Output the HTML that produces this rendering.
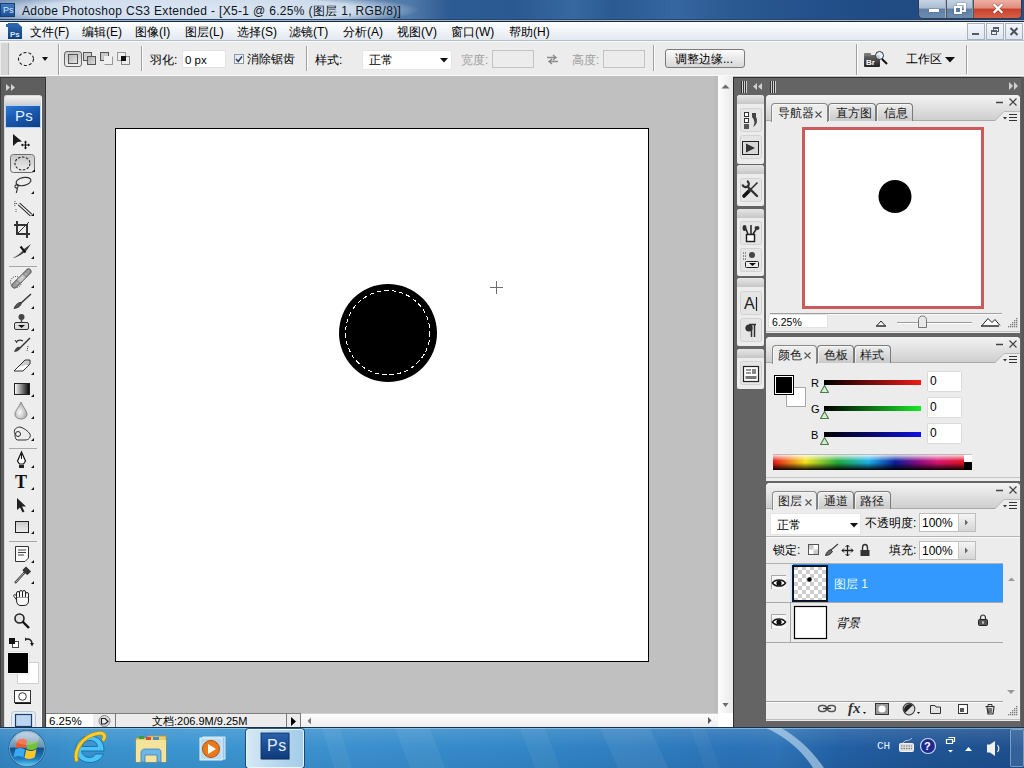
<!DOCTYPE html>
<html><head><meta charset="utf-8">
<style>
*{margin:0;padding:0;box-sizing:border-box}
html,body{width:1024px;height:768px;overflow:hidden;background:#c0c0c0;font-family:"Liberation Sans",sans-serif;font-size:12px;color:#000;position:relative}
.a{position:absolute}
.t{position:absolute;white-space:nowrap;line-height:14px}
#title{left:0;top:0;width:1024px;height:21px;background:linear-gradient(90deg,#7b98bb 0,#8aa4c4 8%,#6f8fb4 30%,#4f79a8 40%,#2c5a92 44%,#2a5890 50%,#3868a0 56%,#2b5a92 60%,#3666a0 66%,#2a5890 72%,#23508a 80%,#1f4a82 88%,#244f88 100%)}
#glow{left:0;top:0;width:440px;height:20px;background:radial-gradient(ellipse 222px 18px at 198px 10px,rgba(222,232,244,.97) 0,rgba(214,226,240,.92) 72%,rgba(195,212,232,0) 100%)}
#titleline{left:0;top:19px;width:1024px;height:3px;background:linear-gradient(#2a4566 0,#2a4566 33%,#9fb6d2 33%,#9fb6d2 66%,#1c2838 66%)}
#menubar{left:0;top:22px;width:1024px;height:19px;background:linear-gradient(#fdfeff,#f1f4f8 45%,#e2e8f0 100%)}
#menuline{left:0;top:40px;width:1024px;height:1px;background:#b6bcc6}
.mi{top:25px;font-size:12px}
#opts{left:0;top:41px;width:1024px;height:35px;background:#ececec;border-top:1px solid #fafafa}
#optsb{left:0;top:75px;width:1024px;height:1px;background:#f8f8f8}
.sep{width:1px;background:#a0a0a0;box-shadow:1px 0 0 #fff;top:46px;height:25px}
.inp{background:#fff;border:1px solid #c7c7c7;border-radius:2px}
.dis{color:#a0a0a0}
</style></head><body>
<!-- title bar -->
<div id="title" class="a"></div>
<div id="glow" class="a"></div>
<div class="a" style="left:0;top:3px;width:15px;height:14px;background:linear-gradient(#3f7bc4,#1d4f95);border:1px solid #1a3f77"></div>
<div class="t" style="left:3px;top:3px;font-size:9px;color:#d8e8fa">Ps</div>
<div class="t" style="left:22px;top:4px;font-size:12px;letter-spacing:0.33px;color:#0b141c">Adobe Photoshop CS3 Extended - [X5-1 @ 6.25% (图层 1, RGB/8)]</div>
<div class="a" style="left:918px;top:0;width:104px;height:19px;border:1px solid #2b3b52;border-top:none;border-radius:0 0 5px 5px;overflow:hidden;background:#555">
 <div class="a" style="left:0;top:0;width:27px;height:18px;background:linear-gradient(#c6d3e3 0,#a9bcd3 45%,#5f7ea4 50%,#6c8cb2 100%);border-right:1px solid #9fb2c8"></div>
 <div class="a" style="left:28px;top:0;width:26px;height:18px;background:linear-gradient(#c6d3e3 0,#a9bcd3 45%,#5f7ea4 50%,#6c8cb2 100%);border-right:1px solid #7d93ad"></div>
 <div class="a" style="left:55px;top:0;width:48px;height:18px;background:linear-gradient(#efb0a4 0,#e08d7c 45%,#c9402a 50%,#d4604a 100%)"></div>
 <div class="a" style="left:10px;top:9px;width:10px;height:3px;background:#fff;box-shadow:0 0 1px #333"></div>
 <div class="a" style="left:38px;top:3px;width:9px;height:9px;border:2px solid #fff;box-shadow:0 0 1px #333"></div>
 <div class="a" style="left:35px;top:6px;width:8px;height:8px;border:2px solid #fff;background:#5a7aa0;box-shadow:0 0 1px #333"></div>
 <svg class="a" style="left:55px;top:0" width="48" height="18"><path d="M20.5 5L27.5 12M27.5 5L20.5 12" stroke="#5a1a10" stroke-width="3.6" stroke-linecap="round" opacity=".5"/><path d="M20.5 5L27.5 12M27.5 5L20.5 12" stroke="#fff" stroke-width="2.4" stroke-linecap="square"/></svg>
</div>
<div id="titleline" class="a"></div>
<!-- menu bar -->
<div id="menubar" class="a"></div>
<div id="menuline" class="a"></div>
<div class="a" style="left:8px;top:23px;width:14px;height:16px;background:linear-gradient(#2d69b4,#12407e);clip-path:polygon(0 0,70% 0,100% 25%,100% 100%,0 100%)"></div>
<div class="a" style="left:6px;top:24px;width:12px;height:3px;background:#2a64ad"></div>
<div class="t" style="left:10px;top:28px;font-size:8px;font-weight:bold;color:#d6e6fb">Ps</div>
<div class="t mi" style="left:30px">文件(F)</div>
<div class="t mi" style="left:82px">编辑(E)</div>
<div class="t mi" style="left:135px">图像(I)</div>
<div class="t mi" style="left:185px">图层(L)</div>
<div class="t mi" style="left:237px">选择(S)</div>
<div class="t mi" style="left:289px">滤镜(T)</div>
<div class="t mi" style="left:343px">分析(A)</div>
<div class="t mi" style="left:397px">视图(V)</div>
<div class="t mi" style="left:451px">窗口(W)</div>
<div class="t mi" style="left:509px">帮助(H)</div>
<div class="a" style="left:967px;top:23px;width:18px;height:17px;border:1px solid #a7b2c0;background:linear-gradient(#f4f7fb,#dfe6ef)"></div>
<div class="a" style="left:986px;top:23px;width:18px;height:17px;border:1px solid #a7b2c0;background:linear-gradient(#f4f7fb,#dfe6ef)"></div>
<div class="a" style="left:1005px;top:23px;width:18px;height:17px;border:1px solid #a7b2c0;background:linear-gradient(#f4f7fb,#dfe6ef)"></div>
<div class="a" style="left:972px;top:33px;width:7px;height:2px;background:#545c68"></div>
<div class="a" style="left:993px;top:27px;width:6px;height:5px;border:1px solid #545c68;border-top-width:2px"></div>
<div class="a" style="left:991px;top:30px;width:6px;height:5px;border:1px solid #545c68;border-top-width:2px;background:#e8edf4"></div>
<svg class="a" style="left:1005px;top:23px" width="18" height="17"><path d="M5.5 5L12.5 12M12.5 5L5.5 12" stroke="#4a525e" stroke-width="2"/></svg>
<!-- options bar -->
<div id="opts" class="a"></div>
<div id="optsb" class="a"></div>
<div class="a" style="left:1px;top:43px;width:8px;height:32px;background:#d6d6d6;border-right:1px solid #b5b5b5"></div>
<svg class="a" style="left:16px;top:50px" width="20" height="18"><ellipse cx="10" cy="9" rx="7.5" ry="6.5" fill="none" stroke="#222" stroke-width="1.1" stroke-dasharray="3 2"/></svg>
<svg class="a" style="left:42px;top:57px" width="7" height="5"><path d="M0 0H6L3 4Z" fill="#111"/></svg>
<div class="a sep" style="left:58px;top:44px!important;height:31px!important"></div>
<div class="a" style="left:64px;top:51px;width:18px;height:16px;border:1px solid #666;border-radius:3px;background:linear-gradient(#c9c9c9,#f1f1f1)"></div>
<div class="a" style="left:68px;top:54px;width:10px;height:10px;border:1px solid #555;background:linear-gradient(135deg,#b5b5b5,#e4e4e4)"></div>
<div class="a" style="left:83px;top:52px;width:9px;height:9px;border:1px solid #555;background:#cfcfcf"></div>
<div class="a" style="left:87px;top:56px;width:9px;height:9px;border:1px solid #555;background:linear-gradient(135deg,#aaa,#ddd)"></div>
<div class="a" style="left:100px;top:52px;width:9px;height:9px;border:1px solid #555;background:#c9c9c9"></div>
<div class="a" style="left:104px;top:56px;width:9px;height:9px;border:1px solid #999;background:#f0f0f0;border-top-color:#f0f0f0;border-left-color:#f0f0f0"></div>
<div class="a" style="left:117px;top:52px;width:9px;height:9px;border:1px solid #999;background:#eee"></div>
<div class="a" style="left:121px;top:56px;width:9px;height:9px;border:1px solid #888;background:transparent"></div>
<div class="a" style="left:121px;top:56px;width:5px;height:5px;background:#111"></div>
<div class="a sep" style="left:141px;top:46px;height:25px"></div>
<div class="t" style="left:150px;top:53px">羽化:</div>
<div class="a inp" style="left:182px;top:50px;width:44px;height:18px;border-color:#e2e2e2"></div>
<div class="t" style="left:185px;top:53px;font-size:11.5px">0 px</div>
<div class="a" style="left:234px;top:54px;width:10px;height:10px;border:1px solid #8f9aa8;background:linear-gradient(135deg,#dfe4ea,#fff)"></div>
<svg class="a" style="left:234px;top:54px" width="10" height="10"><path d="M2 5L4.2 7.5L8 2.5" stroke="#2a3f6a" stroke-width="1.5" fill="none"/></svg>
<div class="t" style="left:247px;top:52px">消除锯齿</div>
<div class="a sep" style="left:306px;top:46px;height:25px"></div>
<div class="t" style="left:315px;top:53px">样式:</div>
<div class="a inp" style="left:362px;top:50px;width:90px;height:20px;border-color:#e4e4e4"></div>
<div class="t" style="left:369px;top:53px">正常</div>
<svg class="a" style="left:440px;top:58px" width="9" height="5"><path d="M0 0H8L4 4.5Z" fill="#111"/></svg>
<div class="t dis" style="left:461px;top:53px">宽度:</div>
<div class="a" style="left:492px;top:50px;width:42px;height:18px;border:1px solid #c3c3c3;background:#ececec"></div>
<svg class="a" style="left:546px;top:54px" width="13" height="11"><path d="M1 3.5H10M7 1L10 3.5L7 6M12 7.5H3M6 5L3 7.5L6 10" stroke="#8a8a8a" stroke-width="1.4" fill="none"/></svg>
<div class="t dis" style="left:572px;top:53px">高度:</div>
<div class="a" style="left:603px;top:50px;width:42px;height:18px;border:1px solid #c3c3c3;background:#ececec"></div>
<div class="a sep" style="left:653px;top:45px;height:26px"></div>
<div class="a" style="left:665px;top:49px;width:80px;height:19px;border:1px solid #7b7b7b;border-radius:3px;background:linear-gradient(#fbfbfb,#e9e9e9 50%,#d8d8d8)"></div>
<div class="t" style="left:675px;top:52px">调整边缘...</div>
<div class="a sep" style="left:856px;top:44px;height:31px"></div>
<div class="a" style="left:864px;top:55px;width:16px;height:12px;background:linear-gradient(#6a6a6a,#232323);border-radius:1px"></div>
<div class="a" style="left:864px;top:53px;width:7px;height:3px;background:#777;border-radius:1px 1px 0 0"></div>
<div class="t" style="left:866px;top:56px;font-size:8px;font-weight:bold;color:#fff">Br</div>
<div class="a" style="left:875px;top:51px;width:9px;height:9px;border:1.5px solid #333;border-radius:50%;background:rgba(230,240,250,.8)"></div>
<svg class="a" style="left:881px;top:58px" width="7" height="7"><path d="M1 1L6 6" stroke="#111" stroke-width="2"/></svg>
<div class="t" style="left:906px;top:52px">工作区</div>
<svg class="a" style="left:945px;top:57px" width="11" height="6"><path d="M0 0H10L5 5.5Z" fill="#111"/></svg>
<div class="a sep" style="left:966px;top:45px;height:29px"></div>
<!-- toolbox -->
<div class="a" style="left:0;top:77px;width:46px;height:651px;background:#5e5e5e;border-left:1px solid #3c3c3c;border-top:1px solid #3a3a3a;border-right:1px solid #353535"></div>
<div class="a" style="left:4px;top:95px;width:38px;height:633px;background:#ededed;border-radius:3px 3px 0 0;border:1px solid #d8d8d8;border-right-color:#fbfbfb;border-bottom:none"></div>
<div class="a" style="left:5px;top:96px;width:36px;height:9px;background:linear-gradient(#f2f2f2,#cfcfcf);border-radius:2px 2px 0 0"></div>
<div class="a" style="left:5px;top:105px;width:36px;height:23px;background:linear-gradient(160deg,#2f7ad8 0,#1b5cb3 40%,#0f3f86 100%);border:1px solid #b8d4f0"></div>
<div class="t" style="left:15px;top:107px;font-size:15px;color:#e8f1ff;letter-spacing:0.2px;line-height:18px">Ps</div>
<svg class="a" style="left:0;top:0" width="46" height="728">
 <g fill="#d4d4d4"><path d="M6 84L10 87.5L6 91Z"/><path d="M11 84L15 87.5L11 91Z"/></g>
 <!-- move -->
 <path d="M13 134L22 141.5L17.5 142L13 146Z" fill="#1a1a1a"/>
 <path d="M25.5 141V149M21.5 145H29.5" stroke="#111" stroke-width="1.2"/>
 <path d="M24 142.5H27L25.5 140.5Z M24 147.5H27L25.5 149.5Z M23 143.5V146.5L21 145Z M28 143.5V146.5L30 145Z" fill="#111"/>
 <!-- marquee selected -->
 <rect x="10.5" y="154.5" width="24" height="18" rx="3" fill="#d9d9d9" stroke="#6d6d6d"/>
 <rect x="11.5" y="155.5" width="22" height="16" rx="2" fill="url(#gsel)"/>
 <ellipse cx="22.5" cy="163.5" rx="7.5" ry="6.5" fill="none" stroke="#222" stroke-width="1.1" stroke-dasharray="2.5 1.5"/>
 <path d="M32 172L35 169V172Z" fill="#111"/>
 <!-- lasso -->
 <ellipse cx="23.5" cy="181.5" rx="7.5" ry="4" fill="none" stroke="#333" stroke-width="1.2" transform="rotate(-12 23.5 181.5)"/>
 <circle cx="16.5" cy="186.5" r="1.6" fill="none" stroke="#333" stroke-width="1.1"/>
 <path d="M17 188C18 190 16 191 16.5 193" stroke="#333" stroke-width="1.2" fill="none"/>
 <path d="M31 194L34 191V194Z" fill="#111"/>
 <!-- wand -->
 <path d="M15 201V206M14 203.5H17M16 209V213" stroke="#555" stroke-width="1" stroke-dasharray="1 1"/>
 <path d="M19 204L31 215" stroke="#222" stroke-width="3.2"/>
 <path d="M19 204L31 215" stroke="#eee" stroke-width="1.4"/>
 <path d="M31 216L34 213V216Z" fill="#111"/>
 <!-- crop -->
 <path d="M17 221V234H30M14 225H27V238" stroke="#333" stroke-width="2" fill="none"/>
 <path d="M17 234L29 222" stroke="#333" stroke-width="1"/>
 <!-- slice -->
 <path d="M13 258C17 256 21 253 24 249L31 244L27 250C23 254 18 257 13 258Z" fill="#3a3a3a"/>
 <path d="M13 258C18 255 22 252 24.5 249" stroke="#aaa" stroke-width=".7" fill="none"/>
 <path d="M20.5 246.5L25.5 252.5" stroke="#111" stroke-width="2"/>
 <path d="M31 259L34 256V259Z" fill="#111"/>
 <path d="M9 266.5H37" stroke="#a8a8a8"/>
 <!-- heal -->
 <circle cx="16" cy="282" r="5.5" fill="none" stroke="#333" stroke-width="1" stroke-dasharray="1 1.2"/>
 <path d="M14.5 285.5L28.5 271.5" stroke="#555" stroke-width="6" stroke-linecap="round"/>
 <path d="M14.5 285.5L28.5 271.5" stroke="#9a9a9a" stroke-width="4.2" stroke-linecap="round"/>
 <path d="M19 281L24 276" stroke="#c8c8c8" stroke-width="4.2"/>
 <g fill="#eee"><circle cx="17" cy="283" r=".6"/><circle cx="26" cy="274" r=".6"/><circle cx="21" cy="279" r=".5"/><circle cx="22.5" cy="277.5" r=".5"/></g>
 <path d="M31 288L34 285V288Z" fill="#111"/>
 <!-- brush -->
 <path d="M31 294L20 304" stroke="#333" stroke-width="1.4"/>
 <path d="M14 308.5C15.5 304.5 18.5 302 21 302.5C22 304.5 19 308 14 308.5Z" fill="#555" stroke="#222" stroke-width=".7"/>
 <path d="M31 309L34 306V309Z" fill="#111"/>
 <!-- stamp -->
 <circle cx="21.5" cy="317" r="3" fill="#444"/>
 <path d="M21.5 319V323" stroke="#444" stroke-width="1.5"/>
 <rect x="14.5" y="322.5" width="14" height="7" rx="1.5" fill="#ddd" stroke="#333"/>
 <path d="M18 325H25L21.5 328Z" fill="#111"/>
 <path d="M31 331L34 328V331Z" fill="#111"/>
 <!-- history brush -->
 <path d="M30 338L19 349" stroke="#333" stroke-width="1.5"/>
 <path d="M14 352C15 348 18 346 20 347C21 349 18 352 14 352Z" fill="#444"/>
 <path d="M16 342C18 340 21 340 23 341" stroke="#333" stroke-width="1.2" fill="none"/>
 <path d="M15 340L17 343" stroke="#333"/>
 <path d="M28 346L27 351" stroke="#333" stroke-dasharray="1 1"/>
 <path d="M31 353L34 350V353Z" fill="#111"/>
 <!-- eraser -->
 <path d="M14 371L21 364H30L23 371Z" fill="#fff" stroke="#333"/>
 <path d="M18 367L25 360H30V364" fill="#ccc" stroke="#333"/>
 <path d="M31 375L34 372V375Z" fill="#111"/>
 <!-- gradient -->
 <defs>
  <linearGradient id="gg" x1="0" x2="1"><stop offset="0" stop-color="#fff"/><stop offset="1" stop-color="#000"/></linearGradient>
  <linearGradient id="gsel" x1="0" y1="0" x2="0" y2="1"><stop offset="0" stop-color="#c7c7c7"/><stop offset="1" stop-color="#efefef"/></linearGradient>
  <radialGradient id="gdrop" cx="0.4" cy="0.6" r="0.7"><stop offset="0" stop-color="#fafafa"/><stop offset="1" stop-color="#9a9a9a"/></radialGradient>
 </defs>
 <rect x="14.5" y="383.5" width="15" height="11" fill="url(#gg)" stroke="#222"/>
 <path d="M31 397L34 394V397Z" fill="#111"/>
 <!-- blur drop -->
 <path d="M21 402C19 407 15 411 15 414C15 417.5 18 419 21 419C24 419 27 417.5 27 414C27 411 23 407 21 402Z" fill="url(#gdrop)" stroke="#777" stroke-width=".8"/>
 <path d="M31 419L34 416V419Z" fill="#111"/>
 <!-- dodge -->
 <path d="M15 434C13 430 16 427 20 427C24 428 28 431 30 434C31 437 29 440 25 440H17C15 439 15 436 15 434Z" fill="#ededed" stroke="#333" stroke-width="1"/>
 <circle cx="18" cy="434" r="2.5" fill="none" stroke="#333"/>
 <path d="M31 441L34 438V441Z" fill="#111"/>
 <path d="M9 448.5H37" stroke="#a8a8a8"/>
 <!-- pen -->
 <path d="M21.5 452L25.5 461L23.5 464H19.5L17.5 461Z" fill="#fff" stroke="#111" stroke-width="1.2"/>
 <path d="M21.5 454V459" stroke="#111"/>
 <path d="M19 465H24V468H19Z" fill="#222"/>
 <path d="M31 468L34 465V468Z" fill="#111"/>
 <!-- type -->
 <path d="M31 490L34 487V490Z" fill="#111"/>
 <!-- path select -->
 <path d="M17 498V510L20 507.5L22.5 512.5L24.5 511.5L22 506.5H26Z" fill="#222"/>
 <path d="M31 512L34 509V512Z" fill="#111"/>
 <!-- shape -->
 <rect x="15.5" y="521.5" width="13" height="11" fill="url(#gsel)" stroke="#222"/>
 <path d="M31 534L34 531V534Z" fill="#111"/>
 <path d="M9 541.5H37" stroke="#a8a8a8"/>
 <!-- notes -->
 <path d="M15.5 546.5H28.5V558L25 561.5H15.5Z" fill="#fafafa" stroke="#333"/>
 <path d="M18 550H26M18 552.5H26M18 555H24" stroke="#444"/>
 <path d="M31 563L34 560V563Z" fill="#111"/>
 <!-- eyedropper -->
 <path d="M15 583L25 572" stroke="#222" stroke-width="2"/>
 <path d="M15.5 582.5L24.5 572.5" stroke="#eee" stroke-width=".8"/>
 <path d="M23 570L27 574M26 567.5L30 571.5L27.5 574L23.5 570Z" stroke="#333" stroke-width="1.5" fill="#333"/>
 <path d="M31 584L34 581V584Z" fill="#111"/>
 <!-- hand -->
 <g fill="#f7f7f7" stroke="#222" stroke-width="1">
  <path d="M17.5 601L14 596.5C13 595 14.5 593.8 15.8 595L18.5 598"/>
  <rect x="16.5" y="591.5" width="3" height="8" rx="1.5"/>
  <rect x="19.5" y="590.5" width="3" height="9" rx="1.5"/>
  <rect x="22.5" y="590.5" width="3" height="9" rx="1.5"/>
  <rect x="25.5" y="592.5" width="3" height="7" rx="1.5"/>
  <path d="M16.5 597.5H28.5V601C28.5 604 26.5 605.5 24 605.5H20C18 605.5 16.5 603 16.5 600Z"/>
 </g>
 <path d="M17.2 598H27.8" stroke="#f7f7f7" stroke-width="1.2"/>
 <!-- zoom -->
 <circle cx="19.5" cy="618.5" r="4.5" fill="#e4e4e4" stroke="#222" stroke-width="1.6"/>
 <path d="M22.5 621.5L29 628" stroke="#111" stroke-width="2.4"/>
 <!-- small fg/bg -->
 <rect x="12.5" y="641.5" width="6" height="6" fill="#fff" stroke="#444"/>
 <rect x="9" y="638" width="6" height="6" fill="#111"/>
 <path d="M27 639C30 639 32 641 32 644" stroke="#222" stroke-width="1.4" fill="none"/>
 <path d="M25 637.5L28 639L25 641Z M30 643L32 646.5L34 643Z" fill="#222"/>
 <!-- fg/bg big -->
 <rect x="17.5" y="662.5" width="21" height="21" fill="#fff" stroke="#cfcfcf"/>
 <rect x="7.5" y="652.5" width="21" height="21" fill="#000" stroke="#fff"/>
 <rect x="7" y="652" width="22" height="22" fill="none" stroke="#d0d0d0" stroke-width=".5"/>
 <!-- quick mask -->
 <rect x="14.5" y="690.5" width="16" height="12" fill="#fff" stroke="#333"/>
 <path d="M15 703H31V704H15Z" fill="#111"/>
 <circle cx="22.5" cy="696.5" r="3.8" fill="#fff" stroke="#333"/>
 <!-- screen mode -->
 <rect x="11.5" y="711.5" width="24" height="17" rx="3" fill="#e7edf4" stroke="#b9c6d4"/>
 <rect x="15.5" y="714.5" width="16" height="12" fill="#bcd6f2" stroke="#1d3f6e" stroke-width="1.2"/>
</svg>
<div class="t" style="left:15px;top:473px;font-size:18px;font-weight:bold;font-family:'Liberation Serif',serif;line-height:18px;color:#111">T</div>
<!-- canvas -->
<div class="a" style="left:46px;top:76px;width:672px;height:637px;background:#c0c0c0"></div>
<div class="a" style="left:115px;top:128px;width:534px;height:534px;background:#fff;border:1px solid #000"></div>
<svg class="a" style="left:0;top:0" width="733" height="712">
 <circle cx="388" cy="333" r="49" fill="#000"/>
 <circle cx="387.8" cy="332.8" r="42.2" fill="none" stroke="#fff" stroke-width="1" stroke-dasharray="4.5 3" shape-rendering="crispEdges"/>
 <path d="M490 287.5H503M496.5 281V294" stroke="#6e6e6e" stroke-width="1"/>
</svg>
<!-- vertical scrollbar -->
<div class="a" style="left:714px;top:76px;width:4px;height:637px;background:#bcbcbc"></div>
<div class="a" style="left:718px;top:76px;width:15px;height:637px;background:linear-gradient(90deg,#fdfdfd 0,#f3f3f3 50%,#e9e9e9 100%)"></div>
<svg class="a" style="left:718px;top:77px" width="15" height="636">
 <path d="M3.5 11.5L7.5 7.5L11.5 11.5Z" fill="#6a6a6a"/>
 <path d="M4.5 626L7.5 630L10.5 626Z" fill="#6a6a6a"/>
</svg>
<!-- status bar -->
<div class="a" style="left:46px;top:713px;width:672px;height:15px;background:#ececec;border-top:1px solid #7e7e7e"></div>
<div class="a" style="left:47px;top:714px;width:46px;height:14px;background:#fff"></div>
<div class="t" style="left:49px;top:714px;font-size:11.5px;line-height:14px">6.25%</div>
<svg class="a" style="left:93px;top:713px" width="208" height="15">
 <circle cx="11.5" cy="8" r="5.5" fill="#d8d8d8" stroke="#8a8a8a"/>
 <path d="M8.5 11V5.5H12L15 8.5L12 11Z" fill="#eee" stroke="#222" stroke-width="1.2"/>
 <path d="M22.5 1V15" stroke="#7a7a7a"/>
 <path d="M193.5 1V15M207.5 1V15" stroke="#7a7a7a"/>
 <path d="M198 4L203 8.5L198 13Z" fill="#000"/>
</svg>
<div class="t" style="left:152px;top:714px;font-size:11px;line-height:14px">文档:206.9M/9.25M</div>
<div class="a" style="left:301px;top:713px;width:417px;height:15px;background:linear-gradient(#fefefe,#ececec);border-top:1px solid #d0d0d0"></div>
<svg class="a" style="left:301px;top:713px" width="417" height="15">
 <path d="M10 4.5L6.5 8L10 11.5Z" fill="#777"/>
 <path d="M407 4L410.5 7.5L407 11Z" fill="#555"/>
</svg>
<div class="a" style="left:718px;top:713px;width:15px;height:15px;background:#fff"></div>
<!-- dock -->
<div class="a" style="left:733px;top:77px;width:291px;height:651px;background:#646464;border-left:1px solid #2c2c2c;border-top:1px solid #2f2f2f"></div>
<div class="a" style="left:1021px;top:77px;width:3px;height:651px;background:#585858"></div>
<svg class="a" style="left:733px;top:77px" width="291" height="18">
 <g stroke="#cfcfcf" stroke-width="1"><path d="M9.5 4V16M11.5 4V16M13.5 4V16M38.5 4V16M40.5 4V16M42.5 4V16"/></g>
 <g stroke="#333" stroke-width="1"><path d="M8.5 4V16M10.5 4V16M12.5 4V16M37.5 4V16M39.5 4V16M41.5 4V16"/></g>
 <g fill="#d0d0d0"><path d="M20 9.5L24 6V13Z"/><path d="M25 9.5L29 6V13Z"/><path d="M276 5L280 9L276 13Z"/><path d="M281 5L285 9L281 13Z"/></g>
</svg>
<!-- icon column groups -->
<div class="a" style="left:737px;top:95px;width:27px;height:69px;background:#ececec;border-radius:3px 3px 2px 2px"></div>
<div class="a" style="left:737px;top:165px;width:27px;height:41px;background:#ececec;border-radius:3px 3px 2px 2px"></div>
<div class="a" style="left:737px;top:209px;width:27px;height:67px;background:#ececec;border-radius:3px 3px 2px 2px"></div>
<div class="a" style="left:737px;top:278px;width:27px;height:68px;background:#ececec;border-radius:3px 3px 2px 2px"></div>
<div class="a" style="left:737px;top:349px;width:27px;height:40px;background:#ececec;border-radius:3px 3px 2px 2px"></div>
<div class="a" style="left:737px;top:95px;width:27px;height:9px;background:linear-gradient(#e6e6e6,#c6c6c6);border-radius:3px 3px 0 0"></div>
<div class="a" style="left:737px;top:165px;width:27px;height:9px;background:linear-gradient(#e6e6e6,#c6c6c6);border-radius:3px 3px 0 0"></div>
<div class="a" style="left:737px;top:209px;width:27px;height:9px;background:linear-gradient(#e6e6e6,#c6c6c6);border-radius:3px 3px 0 0"></div>
<div class="a" style="left:737px;top:278px;width:27px;height:9px;background:linear-gradient(#e6e6e6,#c6c6c6);border-radius:3px 3px 0 0"></div>
<div class="a" style="left:737px;top:349px;width:27px;height:9px;background:linear-gradient(#e6e6e6,#c6c6c6);border-radius:3px 3px 0 0"></div>
<svg class="a" style="left:0;top:0" width="766" height="400">
 <g fill="#e5e5e5" stroke="#d2d2d2">
  <rect x="740.5" y="108.5" width="21" height="23" rx="2"/>
  <rect x="740.5" y="135.5" width="21" height="23" rx="2"/>
  <rect x="740.5" y="178.5" width="21" height="23" rx="2"/>
  <rect x="740.5" y="221.5" width="21" height="23" rx="2"/>
  <rect x="740.5" y="248.5" width="21" height="23" rx="2"/>
  <rect x="740.5" y="291.5" width="21" height="23" rx="2"/>
  <rect x="740.5" y="318.5" width="21" height="23" rx="2"/>
  <rect x="740.5" y="361.5" width="21" height="23" rx="2"/>
 </g>
 <!-- history -->
 <rect x="744.5" y="112.5" width="4" height="4" fill="#fff" stroke="#333"/>
 <rect x="744.5" y="118.5" width="4" height="4" fill="#fff" stroke="#333"/>
 <rect x="744" y="124" width="5" height="5" fill="#555"/>
 <path d="M752 113H756V117C758 120 757 125 753 127C755 124 755 120 752 117Z" fill="#444"/>
 <!-- actions -->
 <rect x="742.5" y="141.5" width="16" height="13" fill="#d8d8d8" stroke="#222"/>
 <path d="M746 143.5L755 148L746 152.5Z" fill="#333"/>
 <!-- tools -->
 <path d="M744 196L749 191" stroke="#111" stroke-width="3.6" stroke-linecap="round"/>
 <path d="M748.5 191.5L757.5 182.5" stroke="#333" stroke-width="1.6"/>
 <path d="M748 187L757 196" stroke="#333" stroke-width="2.4" stroke-linecap="round"/>
 <path d="M742.5 184.5A3.2 3.2 0 1 0 747 181" stroke="#333" stroke-width="2.2" fill="none"/>
 <!-- brushes -->
 <rect x="746.5" y="234.5" width="8" height="7" fill="#fff" stroke="#222" stroke-width="1.5"/>
 <path d="M748 234L745 227M751 234V225M753 234L757 228" stroke="#222" stroke-width="1.5"/>
 <ellipse cx="744.5" cy="228" rx="2" ry="3" fill="#333"/><ellipse cx="757" cy="228" rx="2.5" ry="2" fill="#333"/>
 <!-- clone source -->
 <path d="M743 253H746M743 256H746M743 259H746" stroke="#333" stroke-dasharray="1 1"/>
 <circle cx="752" cy="255" r="3" fill="#444"/>
 <rect x="745.5" y="261.5" width="13" height="6" rx="1" fill="#eee" stroke="#222"/>
 <path d="M749 263H756L752.5 266Z" fill="#111"/>
 <!-- character -->
 <path d="M756.5 297V311" stroke="#222" stroke-width="1.2"/>
 <!-- paragraph -->
 <circle cx="749" cy="328" r="3.6" fill="#333"/>
 <path d="M749 324.5H756M751.5 325V337M754.5 325V337" stroke="#333" stroke-width="1.5"/>
 <!-- layer comps -->
 <rect x="743.5" y="366.5" width="15" height="15" fill="#fff" stroke="#222" stroke-width="1.2"/>
 <path d="M746 370H751M746 373H751" stroke="#333" stroke-width="1.2"/>
 <rect x="752" y="369" width="4" height="5" fill="#888"/>
 <rect x="745.5" y="376" width="11" height="3" fill="#777"/>
</svg>
<div class="t" style="left:744px;top:296px;font-size:16px;line-height:16px;color:#222">A</div>
<!-- panel common -->
<style>
.pnl{position:absolute;left:766px;width:254px;background:#ececec;border-radius:4px 4px 0 0;overflow:hidden}
.phd{position:absolute;left:0;top:0;width:254px;height:26px;background:linear-gradient(#f3f3f3 0,#e4e4e4 40%,#cdcdcd 100%)}
.pln{position:absolute;left:0;top:25px;width:254px;height:1px;background:#a9a9a9}
.tab{position:absolute;top:8px;height:18px;border:1px solid #7b7b7b;border-bottom:none;border-radius:4px 4px 0 0;background:linear-gradient(#ededed,#c9c9c9);box-shadow:inset 1px 1px 0 rgba(255,255,255,.6)}
.tab.on{background:#ececec;height:19px;border-color:#8a8a8a}
.tt{position:absolute;top:11px;white-space:nowrap;line-height:14px;font-size:12px;color:#1a1a1a}
.pmenu{position:absolute;top:0;width:254px;height:26px}
</style>
<!-- NAVIGATOR -->
<div class="pnl" style="top:95px;height:238px">
 <div class="phd"></div>
 <div class="pln"></div>
 <div class="tab on" style="left:5px;width:57px"></div>
 <div class="tab" style="left:62px;width:48px"></div>
 <div class="tab" style="left:110px;width:37px"></div>
 <div class="tt" style="left:12px">导航器</div>
 <div class="tt" style="left:70px">直方图</div>
 <div class="tt" style="left:118px">信息</div>
 <svg class="a" style="left:0;top:0" width="254" height="238">
  <path d="M49.5 16.5L55.5 22.5M55.5 16.5L49.5 22.5" stroke="#555" stroke-width="1.1"/>
  <path d="M230 7.5H237" stroke="#444" stroke-width="1.6"/>
  <path d="M243.5 3.5L250.5 10.5M250.5 3.5L243.5 10.5" stroke="#444" stroke-width="1.2"/>
  <path d="M229 26L238 17H254V26Z" fill="#ececec"/>
  <path d="M229 25.5L238 16.5H254" stroke="#b9b9b9" fill="none"/>
  <path d="M237 22L241 22L239 24.5Z" fill="#333"/>
  <path d="M243 19.5H251M243 22.5H251M243 25.5H251" stroke="#333" stroke-width="1.2"/>
  <!-- thumbnail -->
  <rect x="37.5" y="33.5" width="179" height="179" fill="#fff" stroke="#cc5a5a" stroke-width="3"/>
  <circle cx="129" cy="101.5" r="16.5" fill="#000"/>
  <!-- separator line -->
  <path d="M4 218.5H236" stroke="#a0a0a0"/>
  <path d="M4 219.5H236" stroke="#fafafa"/>
  <rect x="2.5" y="219.5" width="59" height="13" fill="#fff" stroke="#e3e3e3"/>
  <!-- zoom slider -->
  <path d="M111 230.5L115 226L119 230.5" fill="#fff" stroke="#222" stroke-width="1"/>
  <path d="M110 231H120" stroke="#111" stroke-width="1.3"/>
  <path d="M131 227.5H206" stroke="#9a9a9a"/>
  <path d="M131 228.5H206" stroke="#fff"/>
  <path d="M152.5 232.5V224.5C152.5 222 155 221 156.5 221C158 221 160.5 222 160.5 224.5V232.5Z" fill="#e8e8e8" stroke="#777"/>
  <path d="M216 230.5L222 223.5L226 227.5L229 224.5L234 230.5" fill="#fff" stroke="#222" stroke-width="1"/>
  <path d="M215 231H233" stroke="#111" stroke-width="1.3"/>
  <path d="M0 236.5H254" stroke="#c2c2c2"/>
  <g fill="#7a7a7a"><rect x="250" y="223" width="1.3" height="1.3"/><rect x="248" y="225" width="1.3" height="1.3"/><rect x="250" y="225" width="1.3" height="1.3"/><rect x="246" y="227" width="1.3" height="1.3"/><rect x="248" y="227" width="1.3" height="1.3"/><rect x="250" y="227" width="1.3" height="1.3"/><rect x="244" y="229" width="1.3" height="1.3"/><rect x="246" y="229" width="1.3" height="1.3"/><rect x="248" y="229" width="1.3" height="1.3"/><rect x="250" y="229" width="1.3" height="1.3"/><rect x="242" y="231" width="1.3" height="1.3"/><rect x="244" y="231" width="1.3" height="1.3"/><rect x="246" y="231" width="1.3" height="1.3"/><rect x="248" y="231" width="1.3" height="1.3"/><rect x="250" y="231" width="1.3" height="1.3"/></g>
 </svg>
 <div class="t" style="left:6px;top:221px;font-size:10.5px;line-height:13px">6.25%</div>
</div>
<!-- COLOR -->
<div class="pnl" style="top:337px;height:144px">
 <div class="phd"></div>
 <div class="pln"></div>
 <div class="tab on" style="left:6px;width:45px"></div>
 <div class="tab" style="left:51px;width:37px"></div>
 <div class="tab" style="left:88px;width:37px"></div>
 <div class="tt" style="left:12px">颜色</div>
 <div class="tt" style="left:58px">色板</div>
 <div class="tt" style="left:94px">样式</div>
 <svg class="a" style="left:0;top:0" width="254" height="144">
  <defs>
   <linearGradient id="hue" x1="0" x2="1">
    <stop offset="0" stop-color="#e8141c"/><stop offset=".17" stop-color="#f3e11b"/><stop offset=".34" stop-color="#1fa83a"/><stop offset=".5" stop-color="#19b0e8"/><stop offset=".64" stop-color="#0a1d9a"/><stop offset=".76" stop-color="#8a0a82"/><stop offset=".86" stop-color="#d8156e"/><stop offset="1" stop-color="#e01020"/>
   </linearGradient>
   <linearGradient id="wb" x1="0" y1="0" x2="0" y2="1">
    <stop offset="0" stop-color="#fff" stop-opacity=".95"/><stop offset=".45" stop-color="#fff" stop-opacity="0"/><stop offset=".55" stop-color="#000" stop-opacity="0"/><stop offset="1" stop-color="#000" stop-opacity=".95"/>
   </linearGradient>
   <linearGradient id="sr" x1="0" x2="1"><stop offset="0" stop-color="#000"/><stop offset="1" stop-color="#f01818"/></linearGradient>
   <linearGradient id="sg" x1="0" x2="1"><stop offset="0" stop-color="#000"/><stop offset="1" stop-color="#18e828"/></linearGradient>
   <linearGradient id="sb" x1="0" x2="1"><stop offset="0" stop-color="#000"/><stop offset="1" stop-color="#1010e0"/></linearGradient>
  </defs>
  <path d="M38.5 15.5L44.5 21.5M44.5 15.5L38.5 21.5" stroke="#555" stroke-width="1.1"/>
  <path d="M230 7.5H237" stroke="#444" stroke-width="1.6"/>
  <path d="M243.5 3.5L250.5 10.5M250.5 3.5L243.5 10.5" stroke="#444" stroke-width="1.2"/>
  <path d="M229 26L238 17H254V26Z" fill="#ececec"/>
  <path d="M229 25.5L238 16.5H254" stroke="#b9b9b9" fill="none"/>
  <path d="M237 22L241 22L239 24.5Z" fill="#333"/>
  <path d="M243 19.5H251M243 22.5H251M243 25.5H251" stroke="#333" stroke-width="1.2"/>
  <!-- swatches -->
  <rect x="20.5" y="50.5" width="19" height="19" fill="#fff" stroke="#a8a8a8"/>
  <rect x="8.5" y="38.5" width="19" height="19" fill="#000" stroke="#000"/>
  <rect x="9.5" y="39.5" width="17" height="17" fill="#000" stroke="#fff"/>
  <!-- sliders -->
  <rect x="58" y="43" width="97" height="5" fill="url(#sr)"/>
  <rect x="58" y="69" width="97" height="5" fill="url(#sg)"/>
  <rect x="58" y="95" width="97" height="5" fill="url(#sb)"/>
  <g fill="#d4ecd0" stroke="#4a7a4a" stroke-width="1.1" stroke-linejoin="round">
   <path d="M54.5 55.5L58.5 48.5L62.5 55.5Z"/>
   <path d="M54.5 81.5L58.5 74.5L62.5 81.5Z"/>
   <path d="M54.5 107.5L58.5 100.5L62.5 107.5Z"/>
  </g>
  <g fill="#fff" stroke="#dadada">
   <rect x="161.5" y="34.5" width="34" height="20" rx="1"/>
   <rect x="161.5" y="60.5" width="34" height="20" rx="1"/>
   <rect x="161.5" y="86.5" width="34" height="20" rx="1"/>
  </g>
  <!-- spectrum -->
  <rect x="7" y="117" width="191" height="16" fill="url(#hue)"/>
  <rect x="7" y="117" width="191" height="16" fill="url(#wb)"/>
  <rect x="198" y="117" width="8" height="8" fill="#fff"/>
  <rect x="198" y="125" width="8" height="8" fill="#000"/>
  <path d="M7 117.5H206" stroke="#888" stroke-opacity=".5"/>
  <path d="M0 140.5H254" stroke="#c4c4c4"/>
 </svg>
 <div class="t" style="left:45px;top:39px;font-size:11px">R</div>
 <div class="t" style="left:45px;top:65px;font-size:11px">G</div>
 <div class="t" style="left:45px;top:91px;font-size:11px">B</div>
 <div class="t" style="left:164px;top:37px;font-size:12px">0</div>
 <div class="t" style="left:164px;top:63px;font-size:12px">0</div>
 <div class="t" style="left:164px;top:89px;font-size:12px">0</div>
</div>
<!-- LAYERS -->
<div class="pnl" style="top:483px;height:238px">
 <div class="phd"></div>
 <div class="pln"></div>
 <div class="tab on" style="left:6px;width:45px"></div>
 <div class="tab" style="left:51px;width:37px"></div>
 <div class="tab" style="left:88px;width:37px"></div>
 <div class="tt" style="left:12px">图层</div>
 <div class="tt" style="left:58px">通道</div>
 <div class="tt" style="left:94px">路径</div>
 <div class="a" style="left:4px;top:30px;width:91px;height:22px;background:#fff;border:1px solid #e6e6e6"></div>
 <div class="t" style="left:11px;top:35px;font-size:12px">正常</div>
 <div class="t" style="left:99px;top:33px;font-size:12px">不透明度:</div>
 <div class="a" style="left:153px;top:30px;width:57px;height:19px;background:#fff;border:1px solid #bdbdbd"></div>
 <div class="a" style="left:192px;top:31px;width:17px;height:17px;background:linear-gradient(#f4f4f4,#d6d6d6);border-left:1px solid #c8c8c8"></div>
 <div class="t" style="left:156px;top:33px;font-size:12px">100%</div>
 <div class="t" style="left:7px;top:60px;font-size:12px">锁定:</div>
 <div class="t" style="left:123px;top:60px;font-size:12px">填充:</div>
 <div class="a" style="left:153px;top:58px;width:57px;height:19px;background:#fff;border:1px solid #bdbdbd"></div>
 <div class="a" style="left:192px;top:59px;width:17px;height:17px;background:linear-gradient(#f4f4f4,#d6d6d6);border-left:1px solid #c8c8c8"></div>
 <div class="t" style="left:156px;top:61px;font-size:12px">100%</div>
 <!-- selected row -->
 <div class="a" style="left:24px;top:81px;width:213px;height:39px;background:#3399ff"></div>
 <div class="a" style="left:24px;top:81px;width:3px;height:39px;background:#cfe4f8"></div>
 <div class="t" style="left:68px;top:94px;font-size:12px;color:#e4fbff">图层 1</div>
 <div class="t" style="left:70px;top:133px;font-size:12px;font-style:italic;color:#000">背景</div>
 <svg class="a" style="left:0;top:0" width="254" height="238">
  <defs>
   <pattern id="chk" x="28" y="83" width="8" height="8" patternUnits="userSpaceOnUse">
    <rect width="8" height="8" fill="#fff"/><rect width="4" height="4" fill="#cdcdcd"/><rect x="4" y="4" width="4" height="4" fill="#cdcdcd"/>
   </pattern>
  </defs>
  <path d="M39.5 16.5L45.5 22.5M45.5 16.5L39.5 22.5" stroke="#555" stroke-width="1.1"/>
  <path d="M230 7.5H237" stroke="#444" stroke-width="1.6"/>
  <path d="M243.5 3.5L250.5 10.5M250.5 3.5L243.5 10.5" stroke="#444" stroke-width="1.2"/>
  <path d="M229 26L238 17H254V26Z" fill="#ececec"/>
  <path d="M229 25.5L238 16.5H254" stroke="#b9b9b9" fill="none"/>
  <path d="M237 22L241 22L239 24.5Z" fill="#333"/>
  <path d="M243 19.5H251M243 22.5H251M243 25.5H251" stroke="#333" stroke-width="1.2"/>
  <path d="M84 40L92 40L88 44.5Z" fill="#111"/>
  <path d="M199 36.5L202 39.5L199 42.5Z" fill="#666"/>
  <path d="M199 64.5L202 67.5L199 70.5Z" fill="#666"/>
  <path d="M0 53.5H254" stroke="#b4b4b4"/>
  <path d="M0 54.5H254" stroke="#fafafa"/>
  <!-- lock icons -->
  <rect x="42.5" y="61.5" width="10" height="10" fill="#fff" stroke="#555"/>
  <rect x="43" y="62" width="4.5" height="4.5" fill="#ccc"/><rect x="47.5" y="66.5" width="4.5" height="4.5" fill="#ccc"/>
  <path d="M65 67L72 61" stroke="#444" stroke-width="1.3"/>
  <path d="M59.5 72.5C60 70 62 67.5 64.5 66.5L66.5 68.5C65 71 62.5 72.5 59.5 72.5Z" fill="#666" stroke="#222" stroke-width=".8"/>
  <path d="M81.5 62V73M76 67.5H87" stroke="#222" stroke-width="1.3"/>
  <path d="M79.5 64L81.5 62L83.5 64M79.5 71L81.5 73L83.5 71M78 65.5L76 67.5L78 69.5M85 65.5L87 67.5L85 69.5" stroke="#222" fill="none"/>
  <path d="M96.5 67V65C96.5 62.5 98 61.5 99 61.5C100 61.5 101.5 62.5 101.5 65V67" stroke="#333" stroke-width="1.4" fill="none"/>
  <rect x="94.5" y="67" width="9" height="6" fill="#333"/>
  <path d="M0 80.5H237" stroke="#b0b0b0"/>
  <!-- row separators -->
  <path d="M0 119.5H237M0 159.5H237" stroke="#a8a8a8"/>
  <path d="M24.5 120V160" stroke="#a8a8a8"/>
  <!-- eye boxes -->
  <path d="M5.5 106V92.5H20" stroke="#aaa" fill="none"/>
  <path d="M5.5 146V131.5H20" stroke="#aaa" fill="none"/>
  <g>
   <rect x="6" y="93" width="14" height="13" fill="#f6f6f6"/>
   <rect x="6" y="132" width="14" height="13" fill="#f6f6f6"/>
   <path d="M6.5 100C9 96 17 96 19.5 100C17 104 9 104 6.5 100Z" fill="#fff" stroke="#1a1a1a" stroke-width="1.5"/>
   <circle cx="13" cy="100" r="2.6" fill="#111"/>
   <path d="M6.5 139C9 135 17 135 19.5 139C17 143 9 143 6.5 139Z" fill="#fff" stroke="#1a1a1a" stroke-width="1.5"/>
   <circle cx="13" cy="139" r="2.6" fill="#111"/>
  </g>
  <!-- layer1 thumb -->
  <rect x="26.5" y="82.5" width="35" height="36" fill="#fff" stroke="#0b1b3a" stroke-width="1"/>
  <rect x="28" y="84" width="32" height="33" fill="url(#chk)"/>
  <rect x="27.5" y="83.5" width="33" height="34" fill="none" stroke="#111"/>
  <circle cx="43.5" cy="96.5" r="2.3" fill="#000"/>
  <!-- bg thumb -->
  <rect x="28.5" y="123.5" width="32" height="32" fill="#fff" stroke="#000" stroke-width="1.2"/>
  <!-- lock on bg -->
  <path d="M214.5 137V135C214.5 133 215.8 132 217 132C218.2 132 219.5 133 219.5 135V137" stroke="#333" stroke-width="1.2" fill="none"/>
  <rect x="212.5" y="136.5" width="9" height="6" rx="1" fill="#555" stroke="#222"/>
  <rect x="216.3" y="138.3" width="1.4" height="2.4" fill="#eee"/>
  <!-- list scrollbar arrows -->
  <path d="M242 98L245.5 94.5L249 98Z" fill="#999"/>
  <path d="M241 207L245 211L249 207Z" fill="#999"/>
  <path d="M0 218.5H237" stroke="#a0a0a0"/>
  <path d="M0 219.5H237" stroke="#fafafa"/>
  <!-- bottom icons -->
  <g fill="none" stroke="#555" stroke-width="1.4"><rect x="52.5" y="222.5" width="8" height="6" rx="3"/><rect x="61.5" y="222.5" width="8" height="6" rx="3"/></g>
  <path d="M57 225.5H65" stroke="#333" stroke-width="1.2"/>
  <rect x="109.5" y="220.5" width="13" height="11" fill="#9a9a9a" stroke="#333"/>
  <circle cx="116" cy="226" r="3.6" fill="#fff"/>
  <circle cx="143" cy="226" r="5.8" fill="#ddd" stroke="#444" stroke-width="1.2"/>
  <path d="M139 230L147 222A5.8 5.8 0 0 0 139 230Z" fill="#222"/>
  <path d="M151 229H154L152.5 231Z M97 229H100L98.5 231Z" fill="#111"/>
  <path d="M164.5 222.5H169L170 224H174.5V230.5H164.5Z" fill="#e4e4e4" stroke="#333"/>
  <rect x="192.5" y="221.5" width="9" height="9" fill="#fff" stroke="#333"/>
  <rect x="194" y="225" width="4" height="4" fill="#555"/>
  <path d="M219.5 223.5H228.5M221 224L222 231H227L228 224M223 225V230M225 225V230" stroke="#333" stroke-width="1.2" fill="#ddd"/>
  <path d="M222 223V221.5H226V223" stroke="#333" fill="none"/>
  <g fill="#7a7a7a"><rect x="250" y="223" width="1.3" height="1.3"/><rect x="248" y="225" width="1.3" height="1.3"/><rect x="250" y="225" width="1.3" height="1.3"/><rect x="246" y="227" width="1.3" height="1.3"/><rect x="248" y="227" width="1.3" height="1.3"/><rect x="250" y="227" width="1.3" height="1.3"/><rect x="244" y="229" width="1.3" height="1.3"/><rect x="246" y="229" width="1.3" height="1.3"/><rect x="248" y="229" width="1.3" height="1.3"/><rect x="250" y="229" width="1.3" height="1.3"/><rect x="242" y="231" width="1.3" height="1.3"/><rect x="244" y="231" width="1.3" height="1.3"/><rect x="246" y="231" width="1.3" height="1.3"/><rect x="248" y="231" width="1.3" height="1.3"/><rect x="250" y="231" width="1.3" height="1.3"/></g>
  <path d="M0 236.5H254" stroke="#bdbdbd"/>
 </svg>
 <div class="t" style="left:82px;top:218px;font-size:15px;font-style:italic;font-weight:bold;font-family:'Liberation Serif',serif;color:#333;line-height:15px">fx</div>
</div>
<!-- TASKBAR -->
<div class="a" style="left:0;top:728px;width:1024px;height:40px;background:linear-gradient(90deg,#3485c2 0,#3a92cd 8%,#3b95d0 20%,#3a8fcd 35%,#3287c7 50%,#2f7ec0 62%,#2a73b7 72%,#2d74b6 76%,#2260a4 82%,#1f5596 90%,#1d4e8c 100%)"></div>
<div class="a" style="left:0;top:728px;width:1024px;height:40px;background:linear-gradient(rgba(255,255,255,.12),rgba(255,255,255,0) 50%,rgba(0,0,0,.05))"></div>
<div class="a" style="left:0;top:727px;width:1024px;height:1px;background:#16324f"></div>
<div class="a" style="left:0;top:728px;width:1024px;height:1px;background:rgba(180,215,240,.55)"></div>
<svg class="a" style="left:0;top:728px" width="1024" height="40">
 <defs>
  <linearGradient id="orb" x1="0" y1="0" x2="0" y2="1"><stop offset="0" stop-color="#b8cfdf"/><stop offset=".45" stop-color="#6a93b3"/><stop offset=".5" stop-color="#13508a"/><stop offset=".8" stop-color="#1f7cc0"/><stop offset="1" stop-color="#5fd0f5"/></linearGradient>
  <linearGradient id="streak" x1="0" x2="1"><stop offset="0" stop-color="#fff" stop-opacity="0"/><stop offset=".5" stop-color="#cfe8fb" stop-opacity=".55"/><stop offset="1" stop-color="#fff" stop-opacity="0"/></linearGradient>
  <linearGradient id="psb" x1="0" y1="0" x2="0" y2="1"><stop offset="0" stop-color="#2a62ad"/><stop offset="1" stop-color="#0f3a7a"/></linearGradient>
 </defs>
 <g fill="#fff">
  <path d="M322 0H340L352 40H334Z" opacity=".05"/>
  <path d="M395 0H430L445 40H410Z" opacity=".06"/>
  <path d="M520 0H545L560 40H535Z" opacity=".05"/>
  <path d="M600 0H650L668 40H618Z" opacity=".06"/>
  <path d="M690 0H705L720 40H705Z" opacity=".04"/>
 </g>
 <path d="M766 0C788 10 804 25 813 40H824C812 22 796 8 781 0Z" fill="#d8ecfb" opacity=".55"/>
 <!-- start orb -->
 <circle cx="27" cy="20.5" r="18.5" fill="#0e3558" opacity=".6"/>
 <circle cx="27" cy="20.5" r="17.5" fill="url(#orb)" stroke="#7fb4dc" stroke-width=".8"/>
 <path d="M17 13C20 10 24 10 27 12.5L25.3 20.5C22.3 18.5 19.5 18.5 15.5 20.5Z" fill="#f0562a"/>
 <path d="M28 12.8C31 15 34.5 15 38.5 12L36.8 20C33.2 22.8 30 22.5 26.5 20.7Z" fill="#74c03c"/>
 <path d="M15.2 21.6C19 19.6 22 19.6 25 21.6L23.3 29.6C20.3 27.6 17.5 27.6 13.5 29.6Z" fill="#3aaaf0"/>
 <path d="M26.2 21.8C29.8 23.6 33 23.6 36.5 21L34.8 29C31.2 31.6 28 31.4 24.5 29.7Z" fill="#ffc828"/>
 <ellipse cx="27" cy="11" rx="12" ry="6" fill="#fff" opacity=".22"/>
 <!-- IE -->
 <path d="M90 8C80.5 8 75.5 15 75.5 21.5C75.5 29 81.5 34.5 90 34.5C96.5 34.5 101.5 31 103.5 26H95.5C94 28.5 92 29.5 89.5 29.5C85 29.5 82 26.5 81.5 23H104C104.5 14 98.5 8 90 8ZM82 18.5C83 14.8 86 12.5 90 12.5C94 12.5 97 14.8 97.5 18.5Z" fill="#4cc3f2" stroke="#1873b4" stroke-width="1"/>
 <path d="M76.5 32C74 21 83 9 95.5 5.8C103 4 106.5 6.5 103.5 11.5" stroke="#b88a10" stroke-width="4.2" fill="none" stroke-linecap="round"/>
 <path d="M76.5 32C74 21 83 9 95.5 5.8C103 4 106.5 6.5 103.5 11.5" stroke="#f7d030" stroke-width="2.8" fill="none" stroke-linecap="round"/>
 <!-- explorer folder -->
 <path d="M136 10H146L148 8H166V34H136Z" fill="#e9cf6a" stroke="#b8953a" stroke-width=".8"/>
 <rect x="136" y="12" width="30" height="22" fill="#f5e39a"/>
 <rect x="139" y="8" width="5" height="3" fill="#3aa048"/><rect x="146" y="9" width="5" height="3" fill="#d84a3a"/><rect x="153" y="9" width="6" height="3" fill="#4a8ad4"/>
 <path d="M141 34V25C141 22 143 21 145 21H158C160 21 161 22 161 25V34H157V27H145V34Z" fill="#6fb6e8" stroke="#3e7fb8" stroke-width=".8"/>
 <!-- WMP -->
 <rect x="203" y="9" width="22" height="22" fill="#9bc8ea" stroke="#d8ecf8" stroke-width="1"/>
 <rect x="200" y="10" width="22" height="22" fill="#b8daf2" stroke="#e8f4fc" stroke-width="1"/>
 <circle cx="211" cy="21" r="8.5" fill="#e87a1c" stroke="#b84e0a" stroke-width="1"/>
 <path d="M208 16L216 21L208 26Z" fill="#fff"/>
 <!-- PS taskbar button -->
 <defs><linearGradient id="psbtn" x1="0" x2="1"><stop offset="0" stop-color="#d6e8f4"/><stop offset=".5" stop-color="#b9d8ee"/><stop offset="1" stop-color="#a4cdea"/></linearGradient></defs>
 <rect x="245.5" y="0.5" width="59" height="40" rx="3" fill="none" stroke="#0f2a48" stroke-opacity=".7"/>
 <rect x="246.5" y="1.5" width="57" height="38" rx="2.5" fill="url(#psbtn)" stroke="#e8f6ff"/>
 <rect x="262" y="6" width="28" height="26" fill="#000" opacity=".18"/>
 <rect x="261" y="5" width="28" height="26" fill="url(#psb)" stroke="#0b2d60" stroke-width=".8"/>
 <!-- tray -->
 <rect x="899.5" y="15.5" width="14" height="8" rx="1" fill="#dcdcdc" stroke="#f2f2f2"/>
 <path d="M901 18H912M901 20.5H912" stroke="#777" stroke-dasharray="1.5 1"/>
 <path d="M903 15C905 11 909 14 912 10" stroke="#b8c8d4" stroke-width="1" fill="none"/>
 <circle cx="928" cy="18" r="7.5" fill="#1e2a8e" stroke="#cfd8f0" stroke-width="1.2"/>
 <path d="M946.5 11.5H952.5V15.5H946.5Z M948.5 9.5H954.5V13.5H952.5" stroke="#fff" stroke-width="1.2" fill="none"/>
 <path d="M948 22H953L950.5 24.5Z" fill="#fff"/>
 <path d="M965 23L968.5 19L972 23Z" fill="#fff"/>
 <path d="M987 16.5H990L995 13V28L990 24.5H987Z" fill="#f0f0f0"/>
 <path d="M997.5 17C999 19 999 22 997.5 24" stroke="#f0f0f0" stroke-width="1.2" fill="none"/>
 <rect x="1010.5" y="1.5" width="13" height="37" rx="1" fill="rgba(120,160,200,.25)" stroke="rgba(170,200,230,.6)"/>
</svg>
<div class="t" style="left:267px;top:737px;font-size:16px;color:#e6f0ff;line-height:18px;letter-spacing:0.5px">Ps</div>
<div class="t" style="left:877px;top:739px;font-size:11px;font-family:'Liberation Mono',monospace;color:#e8f0f8;line-height:14px">CH</div>
<div class="t" style="left:924px;top:739px;font-size:11px;font-weight:bold;color:#fff;line-height:14px">?</div>
</body></html>
